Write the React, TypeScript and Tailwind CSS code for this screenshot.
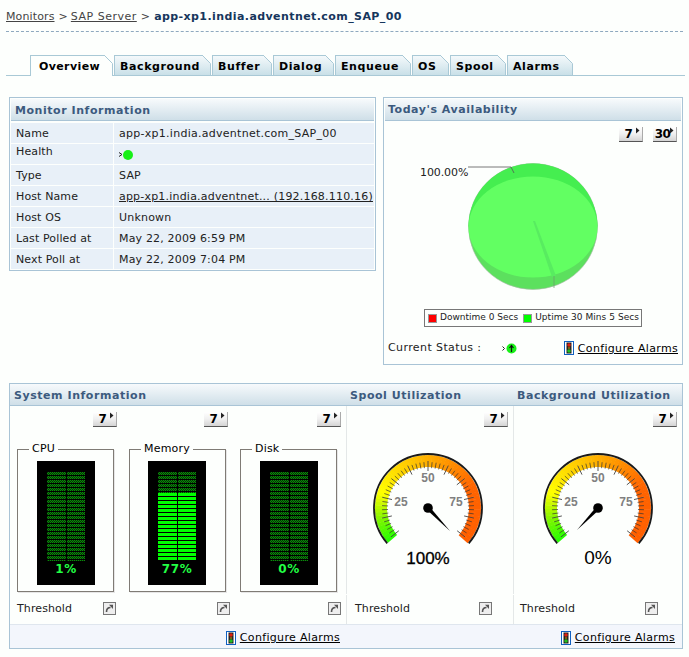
import React from "react";

const font = { fontFamily: '"DejaVu Sans", Verdana, sans-serif' };

function PeriodButton({ label }: { label: string }) {
  return (
    <div className="relative w-[24px] h-[15px] bg-gradient-to-b from-[#ffffff] via-[#f0f0f0] to-[#d4d4d4] border-b border-r border-b-[#555555] border-r-[#aaaaaa] flex items-center justify-center text-[12px] font-bold text-black leading-none tracking-[-0.5px] pr-[4px]">
      {label}
      <svg className="absolute right-[2px] top-0" width="4" height="7" viewBox="0 0 4 7">
        <path d="M0 0.5 L3.5 3.5 L0 6.5 Z" fill="#222222" />
      </svg>
    </div>
  );
}

function Traffic() {
  return (
    <svg width="10" height="14" viewBox="0 0 10 14" className="shrink-0">
      <rect x="0.5" y="0.5" width="9" height="13" fill="#ffffff" stroke="#1060c0" />
      <rect x="2.5" y="1.5" width="5" height="11" fill="#222222" />
      <circle cx="5" cy="4" r="1.8" fill="#e02010" />
      <circle cx="5" cy="7" r="1.2" fill="#806010" />
      <circle cx="5" cy="10" r="1.8" fill="#20c020" />
    </svg>
  );
}

function Configure() {
  return (
    <div className="flex items-center gap-[4px]">
      <Traffic />
      <a className="text-[11px] underline text-black leading-none tracking-[0.33px]">Configure Alarms</a>
    </div>
  );
}

function Popout() {
  return (
    <svg width="13" height="13" viewBox="0 0 13 13" className="block">
      <rect x="0.5" y="0.5" width="12" height="12" fill="#eeeeee" stroke="#777777" />
      <path d="M3.5 10 C3.5 7 5 5.5 7.5 5.5" fill="none" stroke="#555555" strokeWidth="1.6" />
      <path d="M6 2.8 L10 2.8 L10 7 Z" fill="#555555" />
    </svg>
  );
}

function Header({ children, className = "" }: { children: React.ReactNode; className?: string }) {
  return (
    <div className={`h-[22px] bg-gradient-to-b from-[#f7fafc] to-[#cfdfe8] border-b border-[#a9c4d6] flex items-center text-[11px] font-bold text-[#3c5a7e] tracking-[0.55px] ${className}`}>
      {children}
    </div>
  );
}

const tabs = [
  { label: "Background", w: "w-[97px]" },
  { label: "Buffer", w: "w-[60px]" },
  { label: "Dialog", w: "w-[61px]" },
  { label: "Enqueue", w: "w-[76px]" },
  { label: "OS", w: "w-[37px]" },
  { label: "Spool", w: "w-[56px]" },
  { label: "Alarms", w: "w-[66px]" },
];

function TabCorner() {
  return (
    <svg className="absolute -right-px -top-px" width="9" height="9" viewBox="0 0 9 9">
      <path d="M0 0 L9 0 L9 9 Z" fill="#fdfffd" />
      <path d="M0 0 L8.5 8.5" stroke="#a9c9d6" fill="none" />
    </svg>
  );
}

const rows: [string, React.ReactNode, string][] = [
  ["Name", "app-xp1.india.adventnet.com_SAP_00", "tracking-[0.27px]"],
  [
    "Health",
    <span className="flex items-center">
      <svg width="5" height="5" viewBox="0 0 5 5" className="-ml-px">
        <path d="M1 0.5 L4 2.5 L1 4.5" fill="none" stroke="#222" />
      </svg>
      <span className="w-[10px] h-[10px] rounded-full bg-[#18f018]" />
    </span>,
    "",
  ],
  ["Type", "SAP", "tracking-[0.2px]"],
  ["Host Name", <a className="underline">app-xp1.india.adventnet... (192.168.110.16)</a>, "tracking-[0.2px]"],
  ["Host OS", "Unknown", "tracking-[0.2px]"],
  ["Last Polled at", "May 22, 2009 6:59 PM", "tracking-[0.17px]"],
  ["Next Poll at", "May 22, 2009 7:04 PM", "tracking-[0.17px]"],
];

function Pie() {
  return (
    <svg width="180" height="140" viewBox="0 0 180 140" className="block">
      <ellipse cx="114" cy="75.5" rx="64.5" ry="63" fill="#5ce05e" stroke="#a8b8a8" strokeWidth="0.6" />
      <path d="M49.5 75.5 A64.5 63 0 0 1 178.5 75.5 Z" fill="#45ee50" />
      <ellipse cx="114" cy="76" rx="64.5" ry="50.5" fill="#62ff62" />
      <path d="M133 126 L114 70 L116 70 L137 125 Z" fill="#58ec60" />
      <path d="M135 125 L135 137" stroke="#6a9a6a" strokeWidth="0.7" />
      <path d="M49 16 L92 16 L95 22" fill="none" stroke="#555555" strokeWidth="0.8" />
    </svg>
  );
}

function Meter({ pct, label, className }: { pct: number; label: string; className: string }) {
  const top = 11;
  const bottom = 100;
  const solidStart = 32;
  const dimEnd = pct > 50 ? solidStart : bottom;
  const cells: string[] = [];
  const base: string[] = [];
  for (let y = top; y < dimEnd; y++) {
    if ((y - top) % 4 === 3) continue;
    base.push(`M10 ${y}h19v1h-19z M30 ${y}h18v1h-18z`);
    for (let x = 10; x < 48; x++) {
      if (x === 29) continue;
      if ((x + y) % 2 === 0) cells.push(`M${x} ${y}h1v1h-1z`);
    }
  }
  const solid: React.ReactNode[] = [];
  if (pct > 50) {
    for (let y = solidStart; y < bottom; y += 4) {
      solid.push(<rect key={`l${y}`} x="10" y={y} width="19" height="3" fill="#00ff00" />);
      solid.push(<rect key={`r${y}`} x="30" y={y} width="18" height="3" fill="#00ff00" />);
    }
  }
  return (
    <div className={`relative w-[58px] h-[124px] bg-black mt-[5px] ${className}`}>
      <svg width="58" height="124" viewBox="0 0 58 124" className="absolute left-0 top-0" shapeRendering="crispEdges">
        <path d={base.join(" ")} fill="#023502" />
        <path d={cells.join("")} fill="#0a8a0a" />
        {solid}
      </svg>
      <div className="absolute left-0 right-0 top-[101px] text-center text-[12px] font-bold text-[#22ff44] tracking-[0.6px] leading-[14px]">
        {label}
      </div>
    </div>
  );
}

function Fieldset({ legend, pct, label, className, meter }: { legend: string; pct: number; label: string; className: string; meter: string }) {
  return (
    <fieldset className={`border border-[#7f7b75] shadow-[1px_1px_0_#e6e6e6] h-[150px] ${className}`}>
      <legend className="ml-[11px] px-[3px] text-[11px] tracking-[0.2px] leading-[14px] text-black">{legend}</legend>
      <Meter pct={pct} label={label} className={meter} />
    </fieldset>
  );
}

function mix(a: number[], b: number[], t: number) {
  return `rgb(${a.map((v, i) => Math.round(v + (b[i] - v) * t)).join(",")})`;
}

function gaugeColor(t: number) {
  const stops: [number, number[]][] = [
    [0, [40, 255, 0]],
    [0.1, [130, 245, 0]],
    [0.22, [255, 255, 0]],
    [0.5, [255, 175, 0]],
    [0.75, [255, 100, 0]],
    [1, [255, 95, 0]],
  ];
  for (let i = 0; i < stops.length - 1; i++) {
    if (t <= stops[i + 1][0]) {
      const k = (t - stops[i][0]) / (stops[i + 1][0] - stops[i][0]);
      return mix(stops[i][1], stops[i + 1][1], k);
    }
  }
  return "rgb(255,95,0)";
}

function Gauge({ label, tip, size, heavy }: { label: string; tip: [number, number]; size: number; heavy: boolean }) {
  const cx = 60;
  const cy = 58;
  const sweep = 262;
  const pol = (r: number, a: number) => {
    const rad = ((a - 90) * Math.PI) / 180;
    return [cx + r * Math.cos(rad), cy + r * Math.sin(rad)];
  };
  const seg: React.ReactNode[] = [];
  const n = 66;
  for (let i = 0; i < n; i++) {
    const a0 = -131 + (sweep * i) / n;
    const a1 = -131 + (sweep * (i + 1.15)) / n;
    const p = [pol(53, a0), pol(53, a1), pol(41, a1), pol(41, a0)];
    seg.push(<polygon key={i} points={p.map((q) => q.join(",")).join(" ")} fill={gaugeColor(i / (n - 1))} />);
  }
  const ticks: React.ReactNode[] = [];
  const tn = 50;
  for (let i = 0; i <= tn; i++) {
    const a = -128 + (256 * i) / tn;
    const major = i % 5 === 0;
    const [x1, y1] = pol(major ? 37 : 40, a);
    const [x2, y2] = pol(major ? 47 : 46, a);
    ticks.push(<line key={i} x1={x1} y1={y1} x2={x2} y2={y2} stroke={major ? "#444" : "#333"} strokeWidth={major ? 0.9 : 0.7} />);
  }
  const dx = tip[0] - cx;
  const dy = tip[1] - cy;
  const len = Math.hypot(dx, dy);
  const nx = (-dy / len) * 2;
  const ny = (dx / len) * 2;
  const outerA = pol(54, -131);
  const outerB = pol(54, 131);
  return (
    <svg width="120" height="120" viewBox="0 0 120 120" className="block">
      {seg}
      <path d={`M${outerA[0]} ${outerA[1]} A54 54 0 1 1 ${outerB[0]} ${outerB[1]}`} fill="none" stroke="#1a1a1a" strokeWidth="1.8" />
      {ticks}
      <g fontFamily='"Liberation Sans", Arial, sans-serif' fontWeight="700" fontSize="12" fill="#808080" textAnchor="middle">
        <text x="33" y="56">25</text>
        <text x="60" y="32">50</text>
        <text x="88" y="56">75</text>
      </g>
      <polygon points={`${cx + nx},${cy + ny} ${tip[0]},${tip[1]} ${cx - nx},${cy - ny}`} fill="#000" />
      <circle cx={cx} cy={cy} r="4.8" fill="#000" />
      <text
        x="60"
        y="114"
        fontFamily='"Liberation Sans", Arial, sans-serif'
        fontSize={size}
        fill="#000"
        textAnchor="middle"
        stroke={heavy ? "#000" : "none"}
        strokeWidth={heavy ? 0.3 : 0}
      >
        {label}
      </text>
    </svg>
  );
}

export default function App() {
  return (
    <div className="w-[689px] h-[657px] bg-[#fdfffd] text-[11px] text-[#222222] overflow-hidden" style={font}>
      <div className="mx-[6px] h-[32px] border-b border-dashed border-[#8fa9bf] flex items-center text-[11px] pt-[3px] tracking-[0.12px]">
        <a className="underline text-[#444444]">Monitors</a>
        <span className="ml-[4px] mr-[3px] text-[#444444]">&gt;</span>
        <a className="underline text-[#444444] tracking-[0.5px]">SAP Server</a>
        <span className="mx-[4px] text-[#444444]">&gt;</span>
        <span className="font-bold text-[#16365c] tracking-[0.42px]">app-xp1.india.adventnet.com_SAP_00</span>
      </div>

      <div className="mt-[23px] ml-[6px] w-[679px] h-[21px] border-b border-[#a9c9d6] flex pl-[24px] gap-[1px]">
        <div className="relative w-[83px] h-[21px] border border-b-0 border-[#a9c9d6] bg-[#fdfffd] flex items-center justify-center text-[11px] font-bold text-black tracking-[0.4px] pt-[2px] pr-[4px] z-10">
          Overview
          <TabCorner />
        </div>
        {tabs.map((t) => (
          <div
            key={t.label}
            className={`relative ${t.w} h-[20px] border border-b-0 border-[#a9c9d6] bg-gradient-to-b from-[#f4f9fb] to-[#c9e0e8] flex items-center pl-[5px] pt-[3px] text-[11px] font-bold text-black tracking-[0.6px]`}
          >
            {t.label}
            <TabCorner />
          </div>
        ))}
      </div>

      <div className="mt-[21px] ml-[9px] flex items-start gap-[7px]">
        <div className="w-[367px] border border-[#a9c4d6] p-px">
          <Header className="pl-[4px] pt-[3px]">Monitor Information</Header>
          <div className="mt-[2px] flex flex-col gap-[1px]">
            {rows.map(([k, v, tr]) => (
              <div key={k} className="flex h-[20px] gap-[1px]">
                <div className={`w-[102px] shrink-0 bg-[#e8f0f8] pl-[5px] flex tracking-[0.12px] ${k === "Health" ? "items-start leading-[16px]" : "items-center pt-[3px]"}`}>{k}</div>
                <div className={`flex-1 bg-[#e8f0f8] pl-[5px] flex items-center whitespace-nowrap ${tr} ${k === "Health" ? "pt-px" : "pt-[3px]"}`}>{v}</div>
              </div>
            ))}
          </div>
        </div>

        <div className="w-[300px] h-[268px] border border-[#a9c4d6] flex flex-col p-px pt-0">
          <Header className="pl-[3px] mt-px pt-[2px]">Today's Availability</Header>
          <div className="flex justify-end gap-[10px] mt-[6px] pr-[4px]">
            <PeriodButton label="7" />
            <PeriodButton label="30" />
          </div>
          <div className="relative mt-[9px] pl-[34px] h-[140px]">
            <Pie />
            <span className="absolute left-[35px] top-[15px] text-[11px] leading-[14px] tracking-[-0.1px]">100.00%</span>
          </div>
          <div className="mt-[18px] ml-[39px] w-[218px] h-[18px] border border-[#777777] flex items-center pl-[3px] text-[9px] text-[#222] whitespace-nowrap">
            <span className="shrink-0 w-[9px] h-[9px] bg-[#ff0000] border border-[#999] mr-[3px]" />
            <span className="tracking-[0px]">Downtime 0 Secs</span>
            <span className="shrink-0 w-[9px] h-[9px] bg-[#00ff00] border border-[#999] ml-[5px] mr-[3px]" />
            <span className="tracking-[0.05px]">Uptime 30 Mins 5 Secs</span>
          </div>
          <div className="mt-[13px] flex items-center pl-[3px] pr-[3px]">
            <span className="w-[114px] tracking-[0.4px]">Current Status :</span>
            <svg width="16" height="11" viewBox="0 0 16 11">
              <path d="M0.5 3.5 L2.5 5.5 L0.5 7.5" fill="none" stroke="#222" />
              <circle cx="9.5" cy="5.5" r="5" fill="#18f018" />
              <path d="M9.5 9 L9.5 3 M7.5 5 L9.5 2.5 L11.5 5" fill="none" stroke="#111" strokeWidth="1.2" />
            </svg>
            <div className="ml-auto">
              <Configure />
            </div>
          </div>
        </div>
      </div>

      <div className="mt-[18px] ml-[9px] w-[674px] h-[266px] border border-[#a9c4d6] flex flex-col">
        <Header className="pt-[3px]">
          <span className="w-[336px] pl-[4px]">System Information</span>
          <span className="w-[167px] pl-[4px]">Spool Utilization</span>
          <span className="pl-[4px]">Background Utilization</span>
        </Header>

        <div className="flex h-[218px]">
          <div className="w-[336px] flex">
            {[
              { w: "w-[111px]", pr: "pr-[4px]", fs: "ml-[7px] w-[97px]", meter: "ml-[19px]", legend: "CPU", pct: 1, label: "1%" },
              { w: "w-[112px]", pr: "pr-[5px]", fs: "ml-[8px] w-[97px]", meter: "ml-[18px]", legend: "Memory", pct: 77, label: "77%" },
              { w: "w-[113px]", pr: "pr-[5px]", fs: "ml-[7px] w-[97px]", meter: "ml-[19px]", legend: "Disk", pct: 0, label: "0%" },
            ].map((c, i) => (
              <div key={c.legend} className={`${c.w} flex flex-col`}>
                <div className={`flex justify-end mt-[6px] ${c.pr}`}>
                  <PeriodButton label="7" />
                </div>
                <div className="h-[15px]" />
                <Fieldset legend={c.legend} pct={c.pct} label={c.label} className={c.fs} meter={c.meter} />
                <div className="mt-[9px] flex items-center h-[16px]">
                  <span className="ml-[7px] text-[11px] tracking-[0.1px]">{i === 0 ? "Threshold" : ""}</span>
                  <span className={`ml-auto -mt-[2px] ${i === 0 ? "mr-[5px]" : i === 1 ? "mr-[3px]" : "mr-[5px]"}`}>
                    <Popout />
                  </span>
                </div>
              </div>
            ))}
          </div>

          <div className="w-[167px] flex flex-col">
            <div className="h-[188px] border-l border-[#e4e8e8]">
              <div className="flex justify-end mt-[6px] pr-[5px]">
                <PeriodButton label="7" />
              </div>
              <div className="mt-[23px] ml-[21px]">
                <Gauge label="100%" tip={[82, 81]} size={17} heavy={true} />
              </div>
            </div>
            <div className="mt-px flex-1 border-l border-[#e4e8e8] pt-[6px]">
              <div className="flex items-center h-[16px] pl-[8px] pr-[21px]">
                <span className="tracking-[0.1px]">Threshold</span>
                <span className="ml-auto -mt-[2px]">
                  <Popout />
                </span>
              </div>
            </div>
          </div>

          <div className="flex-1 flex flex-col">
            <div className="h-[188px] border-l border-[#e4e8e8]">
              <div className="flex justify-end mt-[6px] pr-[5px]">
                <PeriodButton label="7" />
              </div>
              <div className="mt-[23px] ml-[24px]">
                <Gauge label="0%" tip={[39, 80]} size={19} heavy={false} />
              </div>
            </div>
            <div className="mt-px flex-1 border-l border-[#e4e8e8] pt-[6px]">
              <div className="flex items-center h-[16px] pl-[6px] pr-[24px]">
                <span className="tracking-[0.1px]">Threshold</span>
                <span className="ml-auto -mt-[2px]">
                  <Popout />
                </span>
              </div>
            </div>
          </div>
        </div>

        <div className="flex-1 bg-[#f3f6fc] border-t border-[#dfe6ee] flex items-center pt-[2px]">
          <div className="w-[336px] flex justify-end pr-[6px]">
            <Configure />
          </div>
          <div className="flex-1 flex justify-end pr-[7px]">
            <Configure />
          </div>
        </div>
      </div>
    </div>
  );
}
